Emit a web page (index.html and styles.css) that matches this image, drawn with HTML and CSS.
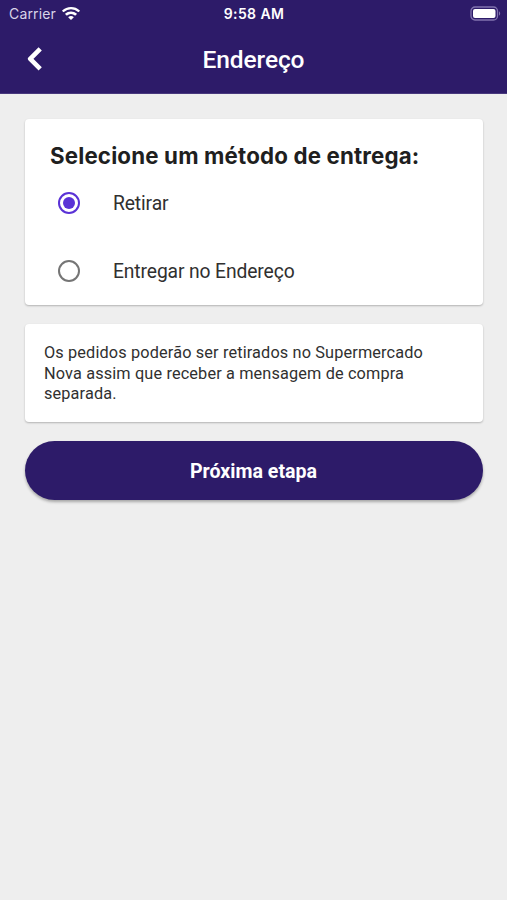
FILE: index.html
```html
<!DOCTYPE html>
<html lang="pt-BR">
<head>
<meta charset="utf-8">
<meta name="viewport" content="width=device-width, initial-scale=1">
<title>Endereço</title>
<link rel="stylesheet" href="styles.css">
</head>
<body>
<header class="header">
  <div class="status">
    <div class="carrier"><span>Carrier</span>
      <svg class="wifi" width="18" height="14" viewBox="0 0 18 14" fill="#fff"><path d="M9 0C5.6 0 2.5 1.3.2 3.4a.4.4 0 0 0 0 .6l1.1 1.1c.2.2.4.2.6 0A10.300 10.300 0 0 1 16.100 5.100c.2.200.4.200.6 0L17.800 4a.4.4 0 0 0 0-.6A13 13 0 0 0 9 0z"/><path d="M9 4.400c-2.200 0-4.200.8-5.700 2.200a.4.4 0 0 0 0 .6l1.200 1.200c.2.100.4.100.6 0a5.800 5.800 0 0 1 7.800 0c.2.100.4.100.6 0l1.200-1.200a.4.4 0 0 0 0-.6A8.400 8.400 0 0 0 9 4.400z"/><path d="M9 8.900c-1 0-1.900.4-2.600 1a.4.4 0 0 0 0 .6l2.300 2.300c.2.200.4.200.6 0l2.300-2.300a.4.4 0 0 0 0-.6A3.900 3.900 0 0 0 9 8.900z"/></svg>
    </div>
    <span class="time">9:58 AM</span>
    <svg class="battery" width="31" height="16" viewBox="0 0 31 16"><rect x="1" y="1" width="26.500" height="13" rx="4" fill="none" stroke="#8173ae" stroke-width="1.300"/><rect x="3" y="3" width="22.500" height="9" rx="2" fill="#fff"/><path d="M29 5.300v4.400c1.600-.8 1.600-3.600 0-4.400z" fill="#8173ae"/></svg>
  </div>
  <div class="appbar">
    <button class="back" aria-label="Voltar"><svg width="16" height="26" viewBox="0 0 16 26"><path d="M13.200 2.800 3.200 12.800l10 10" fill="none" stroke="#fff" stroke-width="4.600" stroke-linejoin="round"/></svg></button>
    <h1 class="title">Endereço</h1>
  </div>
</header>
<main class="content">
  <section class="card methods">
    <h2 class="heading">Selecione um método de entrega:</h2>
    <div class="option"><span class="radio radio-on"></span><span class="label">Retirar</span></div>
    <div class="option"><span class="radio"></span><span class="label">Entregar no Endereço</span></div>
  </section>
  <section class="card note">Os pedidos poderão ser retirados no Supermercado<br>Nova assim que receber a mensagem de compra<br>separada.</section>
  <button class="next">Próxima etapa</button>
</main>
</body>
</html>
```
FILE: styles.css
```css
* { box-sizing: border-box; }
body {
  margin: 0;
  min-height: 900px;
  background: #eee;
  color: #303030;
  font-family: Roboto, sans-serif;
}
button { border: 0; padding: 0; background: none; color: inherit; font-family: inherit; }
svg { display: block; }
.header { height: 94px; background: #2d1b69; color: #fff; border-bottom: 1px solid #48387d; }
.status {
  display: grid;
  grid-template-columns: 1fr auto 1fr;
  align-items: center;
  height: 27px;
  padding: 0 8px 0 9px;
  font: 14px/27px Inter, sans-serif;
}
.carrier { display: flex; align-items: center; gap: 6px; color: #d9d4e8; letter-spacing: .15px; }
.time { font-weight: 600; font-size: 14px; letter-spacing: .4px; }
.battery { justify-self: end; margin-right: -2px; }
.appbar { display: grid; grid-template-columns: 60px 1fr 60px; align-items: center; height: 66px; }
.back { padding: 0 0 2px 27px; }
.title { margin: 0; text-align: center; font-size: 24.5px; font-weight: 500; letter-spacing: -.1px; line-height: 28px; }
.content { display: flex; flex-direction: column; gap: 19px; padding: 25px 24px 0 25px; }
.card { background: #fff; border-radius: 4px; box-shadow: 0 1px 2px rgba(0, 0, 0, .25); }
.methods { height: 186px; padding: 23px 25px 0; }
.heading { margin: 0; color: #1f1f1f; font: 650 22.3px/28px Inter, sans-serif; letter-spacing: .16px; white-space: nowrap; }
.option { display: flex; align-items: center; gap: 33px; height: 68px; padding-left: 8px; }
.heading + .option { margin-top: -1.5px; }
.radio { display: grid; place-items: center; width: 22px; height: 22px; border: 2.5px solid #757575; border-radius: 50%; }
.radio-on { border-color: #5a32d6; }
.radio-on::after { content: ""; width: 12px; height: 12px; border-radius: 50%; background: #5a32d6; }
.label { padding-top: 2px; font-size: 19.3px; letter-spacing: -.12px; }
.note { height: 98px; padding: 19px 18px 0 19px; font-size: 16.3px; line-height: 20.7px; letter-spacing: .14px; white-space: nowrap; }
.next { height: 59px; padding: 1px 1px 0 0; border-radius: 30px; background: #2d1b69; color: #fff; font-size: 19.6px; font-weight: 700; box-shadow: 0 2px 3px rgba(0, 0, 0, .3); }
```
